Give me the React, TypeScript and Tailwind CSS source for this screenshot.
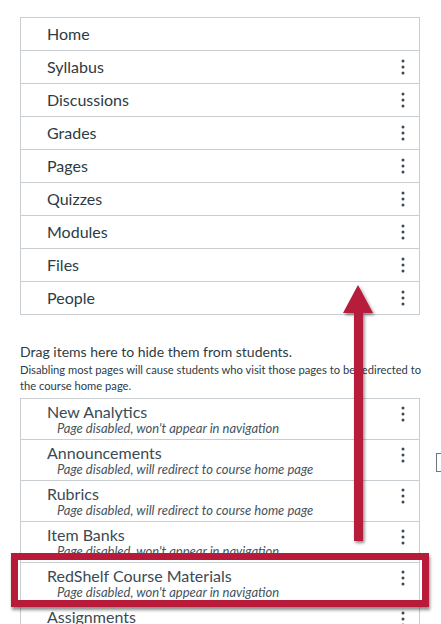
import React from "react";

const font = { fontFamily: "Lato, 'Noto Sans', sans-serif" };

function Kebab() {
  return (
    <svg width="4" height="16" viewBox="0 0 4 16" className="shrink-0">
      <circle cx="2" cy="2" r="1.5" fill="#3d4a55" />
      <circle cx="2" cy="8" r="1.5" fill="#3d4a55" />
      <circle cx="2" cy="14" r="1.5" fill="#3d4a55" />
    </svg>
  );
}

const enabled = ["Home", "Syllabus", "Discussions", "Grades", "Pages", "Quizzes", "Modules", "Files", "People"];

const disabled: [string, string][] = [
  ["New Analytics", "Page disabled, won't appear in navigation"],
  ["Announcements", "Page disabled, will redirect to course home page"],
  ["Rubrics", "Page disabled, will redirect to course home page"],
  ["Item Banks", "Page disabled, won't appear in navigation"],
  ["RedShelf Course Materials", "Page disabled, won't appear in navigation"],
  ["Assignments", "Page disabled, won't appear in navigation"],
];

export default function App() {
  return (
    <div className="relative w-[441px] h-[624px] overflow-hidden bg-white text-[#2d3b45]" style={font}>
      <div className="pt-[17px] pl-[20px] w-[420px]">
        <div className="border-t border-l border-r border-[#c7cdd1]">
          {enabled.map((n, i) => (
            <div key={n} className="h-[33px] border-b border-[#c7cdd1] flex items-center pl-[26px] pr-[14px]">
              <span className="flex-1 text-[16px] leading-none">{n}</span>
              {i > 0 && <Kebab />}
            </div>
          ))}
        </div>
        <div className="mt-[28px] text-[14px] leading-[18px]">Drag items here to hide them from students.</div>
        <div className="mt-[1px] text-[11.2px] leading-[16px] w-[405px]">
          Disabling most pages will cause students who visit those pages to be redirected to the course home page.
        </div>
        <div className="mt-[4px] border-t border-l border-r border-[#c7cdd1]">
          {disabled.map(([n, s]) => (
            <div key={n} className="h-[41px] border-b border-[#c7cdd1] flex items-center pl-[26px] pr-[14px]">
              <div className="flex-1 flex flex-col">
                <span className="text-[16px] leading-[18px] text-[#3b4a55]">{n}</span>
                <span className="pl-[10px] text-[13px] leading-[15px] italic text-[#46535d]">{s}</span>
              </div>
              <div className="self-start pt-[7px]">
                <Kebab />
              </div>
            </div>
          ))}
        </div>
      </div>

      {/* partial element at right edge */}
      <div className="absolute left-[436px] top-[453px] w-[20px] h-[19px] border border-[#6b7780] bg-white" />

      {/* red highlight box */}
      <div className="absolute left-[11px] top-[553px] w-[418px] h-[54px] border-[7px] border-[#b81a3a] shadow-[1px_3px_3px_rgba(0,0,0,0.45)]" />

      {/* arrow */}
      <svg className="absolute left-0 top-0" width="441" height="624" viewBox="0 0 441 624">
        <defs>
          <filter id="sh" x="-50%" y="-10%" width="200%" height="120%">
            <feDropShadow dx="1.5" dy="2" stdDeviation="1.5" floodColor="#000" floodOpacity="0.45" />
          </filter>
        </defs>
        <g filter="url(#sh)">
          <polygon points="358,285 373,313 363,313 363,541 354,541 354,313 343,313" fill="#b81a3a" />
        </g>
      </svg>
    </div>
  );
}
